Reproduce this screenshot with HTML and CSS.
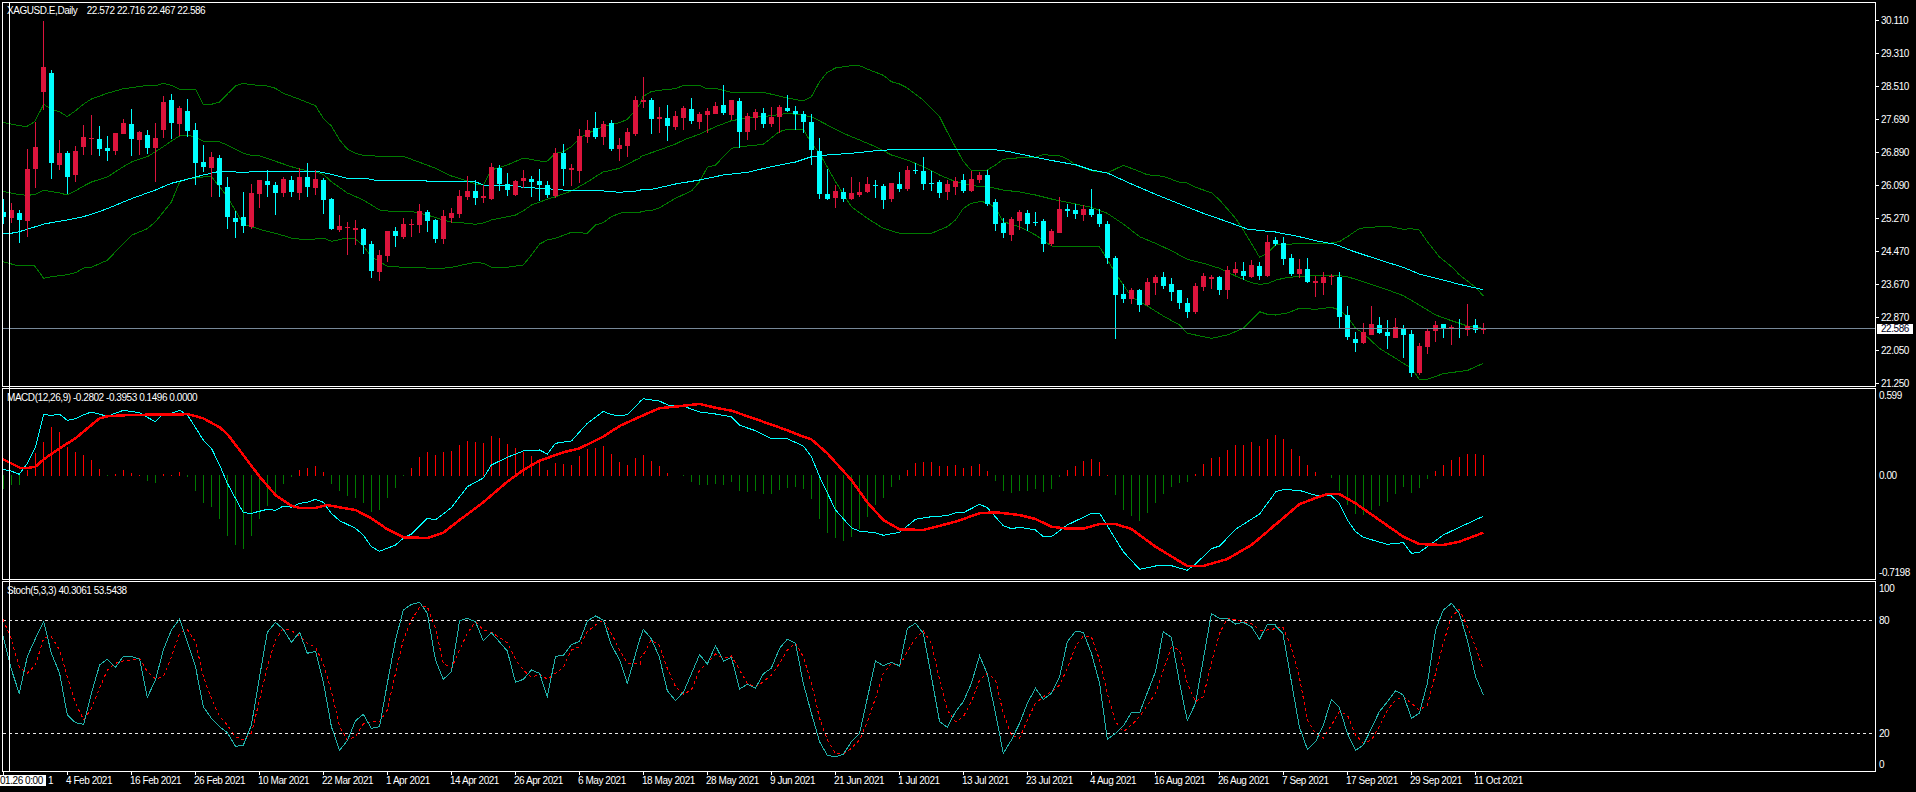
FILE: index.html
```html
<!DOCTYPE html>
<html lang="en">
<head>
    <meta charset="UTF-8">
    <meta name="viewport" content="width=device-width, initial-scale=1.0">
    <title>XAGUSD.E,Daily</title>
    <link rel="stylesheet" href="styles.css">
</head>
<body>
    <div class="terminal">
        <div class="row row-main">
            <div class="pane">
                <div class="legend legend-main">XAGUSD.E,Daily    22.572 22.716 22.467 22.586</div>
                <svg id="mainChart" viewBox="3 3 1872 383"></svg>
            </div>
            <div class="axis price-axis">
                <span>30.110</span>
                <span>29.310</span>
                <span>28.510</span>
                <span>27.690</span>
                <span>26.890</span>
                <span>26.090</span>
                <span>25.270</span>
                <span>24.470</span>
                <span>23.670</span>
                <span>22.870</span>
                <span>22.050</span>
                <span>21.250</span>
                <div class="price-badge">22.586</div>
            </div>
        </div>

        <div class="row row-macd">
            <div class="pane">
                <div class="legend">MACD(12,26,9) -0.2802 -0.3953 0.1496 0.0000</div>
                <svg id="macdChart" viewBox="3 389 1872 190"></svg>
            </div>
            <div class="axis macd-axis">
                <span>0.599</span>
                <span class="zero">0.00</span>
                <span>-0.7198</span>
            </div>
        </div>

        <div class="row row-stoch">
            <div class="pane">
                <div class="legend">Stoch(5,3,3) 40.3061 53.5438</div>
                <svg id="stochChart" viewBox="3 582 1872 189"></svg>
            </div>
            <div class="axis stoch-axis">
                <span>100</span>
                <span>80</span>
                <span>20</span>
                <span>0</span>
            </div>
        </div>

        <div class="time-axis">
            <span class="date date-first">1</span>
            <span class="date">4 Feb 2021</span>
            <span class="date">16 Feb 2021</span>
            <span class="date">26 Feb 2021</span>
            <span class="date">10 Mar 2021</span>
            <span class="date">22 Mar 2021</span>
            <span class="date">1 Apr 2021</span>
            <span class="date">14 Apr 2021</span>
            <span class="date">26 Apr 2021</span>
            <span class="date">6 May 2021</span>
            <span class="date">18 May 2021</span>
            <span class="date">28 May 2021</span>
            <span class="date">9 Jun 2021</span>
            <span class="date">21 Jun 2021</span>
            <span class="date">1 Jul 2021</span>
            <span class="date">13 Jul 2021</span>
            <span class="date">23 Jul 2021</span>
            <span class="date">4 Aug 2021</span>
            <span class="date">16 Aug 2021</span>
            <span class="date">26 Aug 2021</span>
            <span class="date">7 Sep 2021</span>
            <span class="date">17 Sep 2021</span>
            <span class="date">29 Sep 2021</span>
            <span class="date">11 Oct 2021</span>
        </div>

        <div class="crosshair"></div>
        <div class="time-badge">01.26 0:00</div>
    </div>

    <script src="chart.js"></script>
</body>
</html>
```

FILE: styles.css
```css
* {
    box-sizing: border-box;
}
body {
    margin: 0;
    height: 792px;
    overflow: hidden;
    background-color: black;
    color: white;
    font-family: "Liberation Sans", Arial, sans-serif;
    font-size: 10px;
    letter-spacing: -0.45px;
    line-height: 12px;
}
.terminal {
    position: relative;
    width: 1916px;
    height: 792px;
    padding: 2px 0 0 2px;
}
.row {
    display: flex;
}
.row-main {
    height: 385px;
    margin-bottom: 1px;
}
.row-macd {
    height: 192px;
    margin-bottom: 1px;
}
.row-stoch {
    height: 191px;
}
.pane {
    position: relative;
    flex: none;
    width: 1874px;
    height: 100%;
    border: 1px solid white;
}
.pane svg {
    display: block;
    width: 100%;
    height: 100%;
}
.legend {
    position: absolute;
    top: 3px;
    left: 4px;
    white-space: pre;
}
.legend-main {
    top: 2px;
}
.axis {
    flex: none;
    width: 40px;
    white-space: nowrap;
}
.price-axis {
    position: relative;
    display: grid;
    grid-auto-rows: 33px;
    padding-top: 2px;
}
.price-axis span {
    display: flex;
    align-items: center;
    padding-left: 5px;
    background: linear-gradient(white, white) no-repeat 0 50% / 3px 1px;
}
.price-badge {
    position: absolute;
    top: 322px;
    left: 1px;
    width: 36px;
    height: 10px;
    padding-left: 4px;
    background-color: white;
    color: #000020;
    line-height: 10px;
}
.macd-axis {
    display: grid;
    grid-template-rows: 15px 65px 15px 82px 15px;
    align-items: center;
    padding-left: 3px;
}
.macd-axis span:nth-child(2) {
    grid-row: 3;
}
.macd-axis span:nth-child(3) {
    grid-row: 5;
}
.stoch-axis {
    display: grid;
    grid-template-rows: 15px 17px 15px 98px 15px 16px 15px;
    align-items: center;
    padding-left: 3px;
}
.stoch-axis span:nth-child(2) {
    grid-row: 3;
}
.stoch-axis span:nth-child(3) {
    grid-row: 5;
}
.stoch-axis span:nth-child(4) {
    grid-row: 7;
}
.time-axis {
    display: flex;
    white-space: nowrap;
}
.date {
    flex: none;
    width: 64px;
    height: 20px;
    padding-top: 3px;
    background: linear-gradient(white, white) no-repeat 1px 0 / 1px 3px;
}
.date-first {
    padding-left: 46px;
}
.crosshair {
    position: absolute;
    top: 2px;
    left: 9px;
    width: 1px;
    height: 770px;
    background-color: white;
}
.time-badge {
    position: absolute;
    top: 775px;
    left: 0;
    width: 46px;
    height: 11px;
    padding-right: 4px;
    background-color: white;
    color: black;
    line-height: 11px;
    white-space: nowrap;
    text-align: right;
}

/* chart parts */
svg * {
    shape-rendering: crispEdges;
}
svg polyline {
    fill: none;
    stroke-width: 1;
}
.bull {
    fill: #00ffff;
}
.bear {
    fill: #dc143c;
}
.boll {
    stroke: #007a00;
}
.ma {
    stroke: #00ffff;
}
.bid {
    fill: #778899;
}
.hist-up {
    fill: #ff0000;
}
.hist-down {
    fill: #007a00;
}
.macd {
    stroke: #00ffff;
}
svg polyline.signal {
    stroke: #ff0000;
    stroke-width: 2.5;
}
.stoch {
    stroke: #20b2aa;
}
.stoch-signal {
    stroke: #ff0000;
    stroke-dasharray: 3 3;
}
.level {
    stroke: #e8e8e8;
    stroke-width: 1;
    stroke-dasharray: 3 3;
}
```

FILE: chart.js
```js
// everything below was read off the picture: x in crop px (offset + x / 2.45), y in crop px (base + y / 3)
const SVG_NS = 'http://www.w3.org/2000/svg';
const P1 = 0;
const P2 = 640;
const P3 = 1276;

// type, high, body top, body bottom, low
const candles = [
    ['c',597,636,652,672],['r',608,630,654,670],['c',630,638,660,728],['r',447,507,663,711],['r',365,441,507,565],
    ['r',63,201,276,330],['c',211,219,489,537],['r',420,459,495,510],['c',453,459,531,583],['r',438,453,525,546],
    ['r',375,411,441,465],['r',345,413,416,465],['c',378,417,447,468],['c',408,444,453,483],['r',399,399,453,465],
    ['r',357,369,402,402],['c',327,372,417,468],['r',393,396,420,465],['c',390,405,444,462],['r',369,414,444,546],
    ['r',288,306,390,414],['c',282,300,369,417],['r',318,324,372,408],['c',297,333,393,411],['c',369,390,489,555],
    ['c',435,486,501,516],['r',456,471,504,591],['c',465,474,555,591],['c',531,561,651,687],['c',633,654,666,714],
    ['c',576,651,678,699],['r',552,579,681,687],['r',540,540,582,624],['c',510,543,555,591],['c',546,555,579,645],
    ['r',531,537,579,591],['c',528,540,576,591],['r',504,531,579,600],['c',489,531,561,591],['r',510,537,564,585],
    ['c',534,540,600,642],['c',594,597,687,690],['r',645,678,690,696],['r',666,681,684,765],['r',660,684,690,735],
    ['c',684,687,735,762],['c',723,732,813,834],['r',750,765,816,843],['r',693,693,768,786],['c',681,693,708,741],
    ['r',654,672,711,717],['r',657,672,675,711],['r',612,633,675,699],['c',630,636,663,696],['c',657,660,717,729],
    ['r',630,648,717,732],['r',624,639,654,669],['r',570,588,642,654],['r',528,573,591,600],['c',540,573,594,615],
    ['r',555,588,594,609],['r',489,501,597,600],['c',495,504,552,573],['c',519,552,570,588],['r',540,543,585,588],
    ['r',510,534,543,564],['c',528,537,546,591],['c',507,543,555,603],['c',543,555,585,594],['r',444,459,588,594],
    ['c',432,459,507,558],['r',492,504,510,558],['r',387,408,513,549],['r',360,390,411,429],['c',336,384,411,417],
    ['r',363,372,411,435],['c',360,369,447,453],['r',414,435,447,483],['r',385,396,438,471],['r',288,300,402,408],

    ['r',231,300,306,324],['c',294,300,357,402],['r',321,351,357,399],['c',315,354,378,423],['r',333,348,381,390],
    ['r',318,324,354,390],['c',294,327,363,372],['r',336,342,366,387],['r',324,333,345,399],['r',306,318,342,342],
    ['c',255,315,339,345],['r',300,300,345,360],['c',294,303,396,444],['r',339,348,396,420],['r',327,336,354,390],
    ['c',324,339,372,384],['r',321,351,372,381],['r',315,321,351,399],['c',285,324,333,336],['c',318,333,342,390],
    ['c',333,342,366,399],['c',342,366,450,495],['c',414,453,582,597],['c',507,582,597,600],['r',555,573,594,624],
    ['c',564,576,597,606],['r',531,579,597,600],['r',546,576,585,591],['r',531,552,576,579],['c',540,555,558,594],
    ['c',552,558,600,627],['r',549,549,597,606],['c',516,552,567,576],['r',498,510,567,573],['c',489,510,513,522],
    ['c',471,513,552,570],['c',513,549,552,573],['c',540,546,579,594],['r',540,552,576,600],['r',531,543,561,585],
    ['c',522,540,573,579],['r',513,537,573,576],['r',516,525,540,549],['c',510,525,612,618],['c',597,606,672,693],
    ['c',654,669,699,714],['r',651,657,705,723],['r',630,636,663,690],['c',630,639,672,693],['c',636,666,669,678],
    ['c',657,663,732,756],['r',687,693,732,738],['r',591,627,699,699],['c',612,627,633,651],['c',612,630,642,657],
    ['r',615,627,645,663],['c',567,627,645,651],['c',627,642,672,681],['c',663,672,774,792],['c',768,774,885,1017],
    ['c',852,882,897,909],['r',864,870,897,912],['c',867,870,915,936],['r',834,846,915,918],['r',825,831,849,885],
    ['c',816,831,858,867],['c',834,852,876,903],['c',870,870,909,927],['c',894,909,936,954],['r',849,858,936,942],
    ['r',819,828,861,873],['r',825,831,837,867],['c',828,831,870,885],['r',798,810,870,897],['r',786,807,819,825],
    ['c',786,813,828,840],['r',780,795,831,834],['c',786,798,828,840],['r',705,726,828,831],['c',711,720,732,738],

    ['c',711,729,777,795],['c',762,774,822,828],['r',777,807,822,834],['c',774,807,846,849],['r',828,843,849,891],
    ['r',816,831,849,885],['r',822,829,832,855],['c',816,831,951,987],['c',918,945,1011,1020],['c',996,1017,1029,1056],
    ['r',969,996,1029,1032],['r',918,972,1005,1005],['c',951,975,999,1002],['c',960,996,1008,1047],['r',954,981,1014,1014],
    ['c',975,984,1005,1074],['c',990,1002,1120,1130],['r',1029,1038,1120,1125],['r',987,993,1041,1062],['r',963,975,993,1026],
    ['c',972,972,984,1014],['r',975,981,987,1035],['c',957,984,987,1014],['r',912,978,990,1008],['c',957,975,990,999],
    ['r',969,984,990,1002]
];

const bollUpper = [
    [P1,[7,367,40,375,65,380,85,365,107,313,126,328,146,335,165,350,185,332,205,312,224,297,263,280,302,266,322,263,361,256,381,258,400,250,420,256,440,268,479,268,498,313,518,313,538,306,557,282,577,258,596,250,616,254,655,258,675,265,694,280,734,298,773,317,792,355,812,378,832,420,851,447,871,460,890,466,930,469,988,469,1028,487,1067,505,1106,528,1145,543,1165,552,1184,555,1204,510,1243,495,1282,474,1322,483,1341,483,1361,460,1380,455,1400,440,1420,415,1439,400,1478,380,1518,368,1537,358,1557,330,1568,312]],
    [P2,[7,290,27,275,47,271,87,266,107,256,147,256,165,267,185,265,224,277,302,277,361,294,400,303,420,290,440,245,459,217,479,204,518,197,538,197,557,207,596,226,616,245,636,252,655,264,694,300,734,350,753,396,773,442,792,484,812,512,851,510,871,495,890,478,930,473,969,472,988,464,1028,467,1047,477,1067,495,1106,512,1145,519,1165,507,1184,496,1204,505,1243,524,1282,529,1322,547,1341,549,1361,562,1400,578,1420,600,1459,655,1478,690,1518,772,1537,760,1557,735]],
    [P3,[0,733,130,730,155,725,175,710,205,685,273,678,312,688,332,686,351,690,371,725,400,770,430,800,450,825,489,862,508,888]]
];
const bollMid = [
    [P1,[7,574,40,582,65,586,85,584,107,571,146,579,165,585,185,572,205,558,224,546,263,531,302,500,322,486,361,470,381,455,400,440,420,423,440,408,459,405,479,412,498,423,538,426,557,435,596,460,616,466,636,468,675,484,714,500,753,513,773,516,792,523,812,545,851,579,890,600,930,630,969,636,1008,634,1047,645,1086,660,1106,666,1145,670,1165,673,1184,669,1204,660,1243,650,1263,645,1282,633,1302,615,1341,598,1361,590,1400,573,1439,546,1459,530,1478,516,1518,505,1557,480,1568,474]],
    [P2,[0,470,47,450,87,432,107,420,147,402,185,380,224,362,263,354,322,347,361,340,400,346,420,350,459,375,498,400,538,420,577,440,616,465,655,480,694,500,734,525,773,545,812,557,851,560,890,570,930,576,969,585,1008,597,1047,607,1106,622,1145,640,1184,672,1224,710,1263,730,1302,752,1341,778,1380,790,1420,805,1459,828,1498,848,1518,853,1537,851,1557,841]],
    [P3,[0,840,30,832,77,828,155,827,175,830,214,845,263,865,312,887,351,915,391,945,430,962,469,978,508,985]]
];
const bollLower = [
    [P1,[7,785,40,796,85,798,107,835,126,830,165,824,185,818,205,804,224,802,263,781,283,755,322,706,361,686,381,665,420,606,440,546,459,537,498,531,518,530,538,560,557,590,596,672,636,688,675,700,714,714,753,720,792,714,812,724,851,714,871,717,890,738,910,770,949,799,988,802,1028,802,1067,807,1106,802,1145,792,1165,787,1184,790,1204,802,1243,802,1282,795,1302,765,1322,732,1341,720,1361,715,1400,697,1439,700,1459,675,1478,668,1498,650,1518,640,1537,636,1568,636]],
    [P2,[0,634,27,632,47,624,87,595,127,572,146,545,165,502,185,495,224,445,263,438,302,433,341,395,361,388,400,388,420,430,440,460,479,545,518,620,557,655,596,685,636,700,675,700,714,700,753,680,773,660,792,625,812,610,832,605,851,607,871,625,890,665,930,680,969,705,1008,738,1028,739,1106,739,1126,741,1165,820,1204,890,1243,918,1282,948,1322,975,1341,1000,1400,1015,1439,1005,1478,985,1518,935,1537,943,1557,945]],
    [P3,[0,945,30,938,57,925,97,928,136,922,155,930,175,950,195,985,214,1000,253,1045,293,1075,312,1090,332,1105,351,1138,371,1138,410,1121,470,1111,489,1100,508,1090]]
];
const movingAvg = [
    [P1,[7,700,27,700,47,695,87,680,107,672,165,660,204,650,243,635,283,616,322,596,381,570,420,550,459,538,498,525,538,514,596,517,655,513,773,513,812,523,851,535,900,536,920,541,1040,541,1050,545,1165,545,1184,555,1243,556,1282,562,1341,566,1400,572,1459,571,1518,577,1568,572]],
    [P2,[0,570,30,568,87,552,146,540,204,525,263,517,322,500,381,486,420,470,459,465,518,460,587,451,645,448,860,448,900,454,969,472,1028,486,1067,494,1106,510,1145,519,1204,552,1263,583,1322,612,1380,640,1439,665,1488,687,1537,694,1557,696]],
    [P3,[0,697,50,708,97,722,146,733,185,752,234,772,293,795,312,802,351,822,400,837,449,853,508,869]]
];

// crop y where each MACD bar ends, zero sits at 406
const macdHist = [
    447,435,435,390,340,305,260,276,320,336,345,360,387,408,403,390,398,405,423,429,
    402,405,396,411,453,489,501,537,587,614,627,587,537,498,459,432,411,390,384,378,
    396,432,453,468,474,489,516,510,474,444,408,384,351,336,345,336,333,315,303,306,
    309,288,294,312,324,336,348,363,390,369,372,375,348,327,324,318,342,366,375,354,

    345,363,378,399,406,408,426,435,435,432,435,426,453,456,453,462,462,450,444,441,
    447,477,537,579,594,603,591,567,531,495,474,441,420,390,369,366,366,378,378,375,
    384,378,372,393,423,453,459,453,453,447,456,447,411,390,378,363,357,366,405,465,
    510,528,543,519,489,462,441,429,426,402,372,354,351,330,315,315,306,318,297,285,

    297,327,348,375,396,406,414,453,495,522,525,510,498,486,462,441,459,444,417,393,
    375,360,351,342,342,345
];
const macdLine = [
    [P1,[7,388,27,393,47,403,67,370,87,320,107,224,126,226,146,223,165,241,185,236,205,224,224,216,263,229,302,211,342,218,361,232,381,245,400,220,420,220,440,211,459,224,498,300,518,325,538,375,557,430,596,518,616,520,655,508,675,511,694,498,714,502,734,490,753,487,773,478,792,487,812,520,832,542,871,565,890,585,910,620,930,634,969,615,988,595,1008,582,1047,535,1067,539,1106,503,1145,440,1184,414,1204,375,1243,352,1282,333,1322,330,1341,342,1361,310,1400,303,1439,250,1478,214,1498,224,1518,227,1537,224,1568,185]],
    [P2,[0,187,8,176,47,183,70,196,107,199,146,216,185,222,224,230,244,256,283,272,322,296,361,296,400,318,420,350,440,410,479,510,518,563,538,574,577,578,596,586,636,577,675,538,714,530,753,527,773,518,792,518,832,493,851,503,890,557,910,566,930,562,969,570,988,590,1008,590,1047,555,1106,520,1126,520,1184,635,1224,688,1263,678,1302,677,1341,691,1361,672,1400,626,1420,618,1459,568,1518,522,1557,457]],
    [P3,[0,455,20,448,60,452,97,466,136,468,155,490,175,540,195,575,214,592,253,606,273,613,312,608,332,640,351,637,371,620,410,585,449,562,508,529]]
];
const macdSignal = [
    [P1,[7,358,27,370,50,384,67,384,87,380,107,358,146,325,185,295,224,255,244,235,263,229,302,226,361,224,440,224,459,222,498,235,538,262,557,282,596,345,636,410,675,465,714,497,734,504,773,504,800,495,832,502,871,510,910,535,949,568,988,592,1047,594,1086,578,1126,540,1184,487,1243,425,1282,390,1322,362,1380,337,1420,325,1478,290,1518,258,1568,230]],
    [P2,[0,230,47,205,107,197,146,192,185,203,224,212,283,237,361,271,400,290,420,298,459,340,518,420,557,487,596,540,636,568,694,570,773,545,832,520,871,517,930,525,969,537,1008,560,1047,566,1086,566,1126,552,1165,552,1204,567,1263,620,1341,678,1380,678,1439,657,1498,615,1537,575,1557,553]],
    [P3,[0,553,57,493,97,474,127,462,155,462,195,490,253,540,312,590,351,612,410,615,449,605,508,578]]
];

const stochMain = [
    [P1,[7,197,27,295,47,370,67,260,87,205,107,155,126,250,146,310,165,435,185,458,205,463,224,370,244,285,263,268,283,292,302,259,322,259,342,268,361,382,381,330,400,240,420,180,440,147,459,215,479,290,498,410,518,445,538,470,557,488,577,529,596,526,616,465,636,320,655,187,675,157,694,178,714,217,734,187,753,250,773,244,792,335,812,470,832,541,851,512,871,452,890,433,910,475,930,470,949,340,969,210,988,120,1008,103,1028,97,1047,130,1067,270,1086,328,1106,305,1126,152,1145,145,1165,155,1184,213,1204,188,1243,243,1263,337,1282,328,1302,300,1322,310,1341,380,1361,259,1380,256,1400,224,1420,214,1439,153,1459,138,1478,150,1498,225,1518,270,1537,340,1568,205]],
    [P2,[0,208,8,178,27,205,47,260,67,362,87,392,107,365,146,254,165,282,185,227,205,274,224,262,244,357,263,343,283,354,302,312,322,294,342,235,361,208,381,220,400,340,420,430,440,515,459,556,479,560,498,553,518,515,538,490,557,385,577,273,596,287,616,277,636,288,655,175,675,160,694,190,714,320,734,455,753,472,773,425,792,395,812,340,832,257,851,312,871,430,890,550,910,510,930,460,949,400,969,355,988,388,1008,370,1028,320,1047,215,1067,184,1086,187,1106,250,1126,340,1145,508,1165,490,1184,468,1204,428,1224,428,1263,305,1282,185,1302,202,1322,340,1341,452,1361,400,1400,131,1420,145,1439,145,1459,162,1478,157,1498,170,1518,208,1537,163,1557,165]],
    [P3,[0,170,17,190,37,330,57,470,77,538,97,515,116,465,136,388,155,412,175,490,195,541,214,525,234,475,253,425,273,395,293,362,312,375,332,445,351,430,371,340,391,180,410,120,430,100,449,130,469,210,489,320,508,374]]
];
const stochSignal = [
    [P1,[7,148,27,205,47,290,67,310,87,285,107,205,126,200,146,240,165,320,185,400,205,450,224,415,244,355,263,300,283,280,302,273,322,270,342,265,361,305,381,327,400,320,420,260,440,190,459,178,479,215,498,320,518,385,538,440,557,465,577,500,596,510,616,490,636,390,655,290,675,210,694,175,714,182,734,197,753,220,773,232,792,280,812,365,832,470,851,510,871,500,890,462,910,455,930,455,949,420,969,310,988,210,1008,150,1028,112,1047,110,1067,175,1086,280,1106,295,1126,240,1145,190,1165,155,1184,180,1204,187,1243,218,1263,268,1282,300,1302,322,1322,312,1341,328,1361,310,1380,292,1400,240,1420,230,1439,185,1459,165,1478,150,1498,190,1518,240,1537,280,1568,282]],
    [P2,[0,265,8,255,27,210,47,225,67,295,87,350,107,372,126,360,146,300,165,280,185,252,205,265,224,258,244,300,263,340,283,352,302,335,322,315,342,280,361,240,381,220,400,260,420,340,440,445,459,510,479,550,498,552,518,535,538,510,557,455,577,385,596,310,616,280,636,287,655,245,675,205,694,183,714,220,734,330,753,420,773,455,792,440,812,395,832,330,851,310,871,330,890,430,910,495,930,505,949,450,969,400,988,380,1008,365,1028,345,1047,295,1067,230,1086,198,1106,200,1126,270,1145,370,1165,455,1184,485,1204,465,1224,440,1263,370,1282,300,1302,232,1322,240,1341,340,1361,395,1380,380,1400,280,1420,190,1439,145,1459,150,1478,155,1498,160,1518,180,1537,180,1557,176]],
    [P3,[0,172,17,172,37,230,57,320,77,450,97,490,116,505,136,465,155,425,175,435,195,495,214,520,234,510,253,470,273,420,293,390,312,380,332,400,351,420,371,405,391,310,410,220,430,140,449,118,469,170,489,230,508,300]]
];

function add(svg, tag, attrs) {
    const el = document.createElementNS(SVG_NS, tag);
    for (const key in attrs) {
        el.setAttribute(key, attrs[key]);
    }
    svg.appendChild(el);
    return el;
}

function bar(svg, cls, x, top, bottom, width) {
    add(svg, 'rect', { class: cls, x: x, y: top, width: width, height: Math.max(bottom - top, 1) });
}

function drawLine(svg, cls, panels, base) {
    const points = [];
    panels.forEach(([offset, pairs]) => {
        for (let i = 0; i < pairs.length; i += 2) {
            points.push((offset + pairs[i] / 2.45).toFixed(1) + ',' + (base + pairs[i + 1] / 3).toFixed(1));
        }
    });
    add(svg, 'polyline', { class: cls, points: points.join(' ') });
}

function drawCandles(svg) {
    candles.forEach(([type, high, top, bottom, low], i) => {
        const x = 3 + 8 * i;
        const cls = type === 'c' ? 'bull' : 'bear';
        bar(svg, cls, x, Math.round(high / 3), Math.round(low / 3), 1);
        bar(svg, cls, x - 2, Math.round(top / 3), Math.round(bottom / 3), 5);
    });
}

function drawHistogram(svg) {
    macdHist.forEach((end, i) => {
        const x = 3 + 8 * i;
        const y = 340 + Math.round(end / 3);
        if (end < 406) {
            bar(svg, 'hist-up', x, y, 476, 1);
        } else if (end > 406) {
            bar(svg, 'hist-down', x, 475, y, 1);
        }
    });
}

const mainChart = document.getElementById('mainChart');
const macdChart = document.getElementById('macdChart');
const stochChart = document.getElementById('stochChart');

drawLine(mainChart, 'boll', bollUpper, 0);
drawLine(mainChart, 'boll', bollMid, 0);
drawLine(mainChart, 'boll', bollLower, 0);
drawLine(mainChart, 'ma', movingAvg, 0);
drawCandles(mainChart);
add(mainChart, 'rect', { class: 'bid', x: 3, y: 328, width: 1872, height: 1 });

drawHistogram(macdChart);
drawLine(macdChart, 'macd', macdLine, 340);
drawLine(macdChart, 'signal', macdSignal, 340);

add(stochChart, 'line', { class: 'level', x1: 3, x2: 1875, y1: 620.5, y2: 620.5 });
add(stochChart, 'line', { class: 'level', x1: 3, x2: 1875, y1: 733.5, y2: 733.5 });
drawLine(stochChart, 'stoch-signal', stochSignal, 570);
drawLine(stochChart, 'stoch', stochMain, 570);
```
